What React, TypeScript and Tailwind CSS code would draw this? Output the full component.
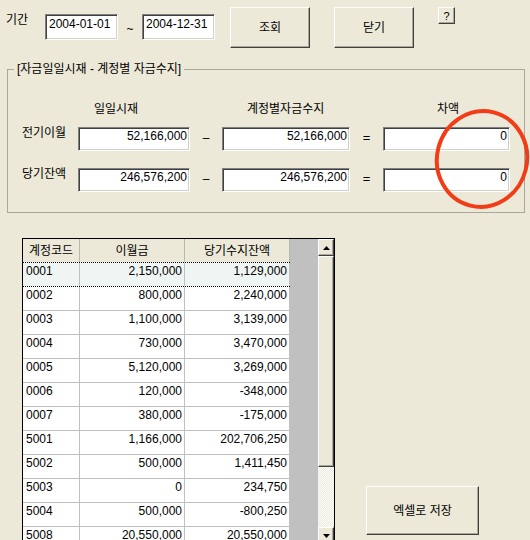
import React from "react";

const rows = [
    ['0001', '2,150,000', '1,129,000'],
    ['0002', '800,000', '2,240,000'],
    ['0003', '1,100,000', '3,139,000'],
    ['0004', '730,000', '3,470,000'],
    ['0005', '5,120,000', '3,269,000'],
    ['0006', '120,000', '-348,000'],
    ['0007', '380,000', '-175,000'],
    ['5001', '1,166,000', '202,706,250'],
    ['5002', '500,000', '1,411,450'],
    ['5003', '0', '234,750'],
    ['5004', '500,000', '-800,250'],
    ['5008', '20,550,000', '20,550,000'],
];

const raised = "bg-[#ece9d8] border border-t-white border-l-white border-r-[#404040] border-b-[#404040] shadow-[inset_-1px_-1px_0_#aca899]";
const sunken = "bg-white border border-t-[#808080] border-l-[#808080] border-b-white border-r-white shadow-[inset_1px_1px_0_#404040,inset_-1px_-1px_0_#d4d0c8]";

function Field({ value, className, right }: { value: string, className: string, right?: boolean }) {
    return (
        <div className={`${sunken} ${className} text-[12px] leading-[12px] ${right ? 'text-right pr-[2px] pt-[2px]' : 'pl-[3px] pt-[3px]'}`}>
            {value}
        </div>
    );
}

function Arrow({ up }: { up?: boolean }) {
    return (
        <svg width="7" height="4" viewBox="0 0 7 4">
            <polygon points={up ? "3.5,0 7,4 0,4" : "0,0 7,0 3.5,4"} fill="#000" />
        </svg>
    );
}

export default function App() {
    return (
        <div className="relative w-[530px] h-[540px] overflow-hidden bg-[#ece9d8] text-black font-['Liberation_Sans','Noto_Sans_CJK_KR',sans-serif]">
            {/* top bar */}
            <div className="flex items-start pt-[7px] h-[48px]">
                <div className="ml-[6px] w-[39px] mt-[7px] text-[12px] leading-[12px]">기간</div>
                <Field value="2004-01-01" className="w-[73px] h-[26px] mt-[7px]" />
                <div className="w-[24px] text-center mt-[16px] text-[12px] leading-[12px]">~</div>
                <Field value="2004-12-31" className="w-[73px] h-[26px] mt-[7px]" />
                <button className={`${raised} ml-[15px] w-[80px] h-[41px] text-[12px]`}>조회</button>
                <button className={`${raised} ml-[24px] w-[80px] h-[41px] text-[12px]`}>닫기</button>
                <button className={`${raised} ml-[24px] w-[17px] h-[17px] text-[11px] leading-[12px] flex items-center justify-center`}>?</button>
            </div>

            {/* group box */}
            <fieldset className="ml-[7px] mt-[14px] w-[518px] border border-[#aca899] pb-[20px]">
                <legend className="ml-[6px] px-[3px] text-[12px] leading-[14px]">[자금일일시재 - 계정별 자금수지]</legend>
                <div className="flex mt-[26px] h-[14px] text-[12px] leading-[14px]">
                    <span className="ml-[86px] w-[48px]">일일시재</span>
                    <span className="ml-[105px] w-[84px]">계정별자금수지</span>
                    <span className="ml-[106px]">차액</span>
                </div>
                {[
                    ['전기이월', '52,166,000', '52,166,000', '0'],
                    ['당기잔액', '246,576,200', '246,576,200', '0'],
                ].map((r, i) => (
                    <div key={i} className={`flex items-start ${i === 0 ? 'mt-[11px]' : 'mt-[17px]'}`}>
                        <div className="w-[70px] pl-[14px] text-[12px] leading-[12px]">{r[0]}</div>
                        <Field value={r[1]} right className="w-[112px] h-[24px]" />
                        <div className="w-[32px] h-[22px] flex items-center justify-center text-[12px]">–</div>
                        <Field value={r[2]} right className="w-[128px] h-[24px]" />
                        <div className="w-[33px] h-[22px] flex items-center justify-center text-[13px]">=</div>
                        <Field value={r[3]} right className="w-[127px] h-[24px]" />
                    </div>
                ))}
            </fieldset>

            {/* grid + button */}
            <div className="flex items-start mt-[25px]">
                <div className="ml-[22px] w-[313px] flex border border-black bg-white">
                    <div className="w-[267px] flex flex-col text-[12px] leading-[14px]">
                        <div className="grid grid-cols-[57px_105px_105px] h-[23px] bg-[#ece9d8]">
                            {['계정코드', '이월금', '당기수지잔액'].map(h => (
                                <div key={h} className="border-r border-[#b8b8b0] flex items-center justify-center">{h}</div>
                            ))}
                        </div>
                        {rows.map((r, i) => (
                            <div
                                key={r[0]}
                                className={`grid grid-cols-[57px_105px_105px] ${i === 0 ? 'h-[25px] bg-[#eff5f3] border-y border-dotted border-black' : 'h-[24px] border-b border-[#c0c0c0]'}`}
                            >
                                <div className="border-r border-[#c0c0c0] pl-[3px] pt-[1px]">{r[0]}</div>
                                <div className="border-r border-[#c0c0c0] text-right pr-[2px] pt-[1px]">{r[1]}</div>
                                <div className="border-r border-[#c0c0c0] text-right pr-[2px] pt-[1px]">{r[2]}</div>
                            </div>
                        ))}
                    </div>
                    <div className="w-[28px] bg-[#c0c0c0]" />
                    <div className="w-[16px] flex flex-col bg-[#ece9d8]">
                        <div className={`${raised} h-[17px] flex items-center justify-center`}><Arrow up /></div>
                        <div className={`${raised} h-[211px]`} />
                        <div className="h-[60px] bg-[image:repeating-conic-gradient(#ffffff_0%_25%,#ece9d8_0%_50%)] bg-[length:2px_2px]" />
                        <div className={`${raised} h-[17px] flex items-center justify-center`}><Arrow /></div>
                    </div>
                </div>
                <button className={`${raised} ml-[31px] mt-[248px] w-[113px] h-[49px] text-[12px]`}>엑셀로 저장</button>
            </div>

            {/* red circle annotation */}
            <svg className="absolute left-[425px] top-[100px] pointer-events-none" width="110" height="120" viewBox="0 0 110 120">
                <ellipse cx="57" cy="59" rx="45" ry="48" transform="rotate(14 57 59)" fill="none" stroke="#f23c17" strokeWidth="4" />
            </svg>
        </div>
    );
}
